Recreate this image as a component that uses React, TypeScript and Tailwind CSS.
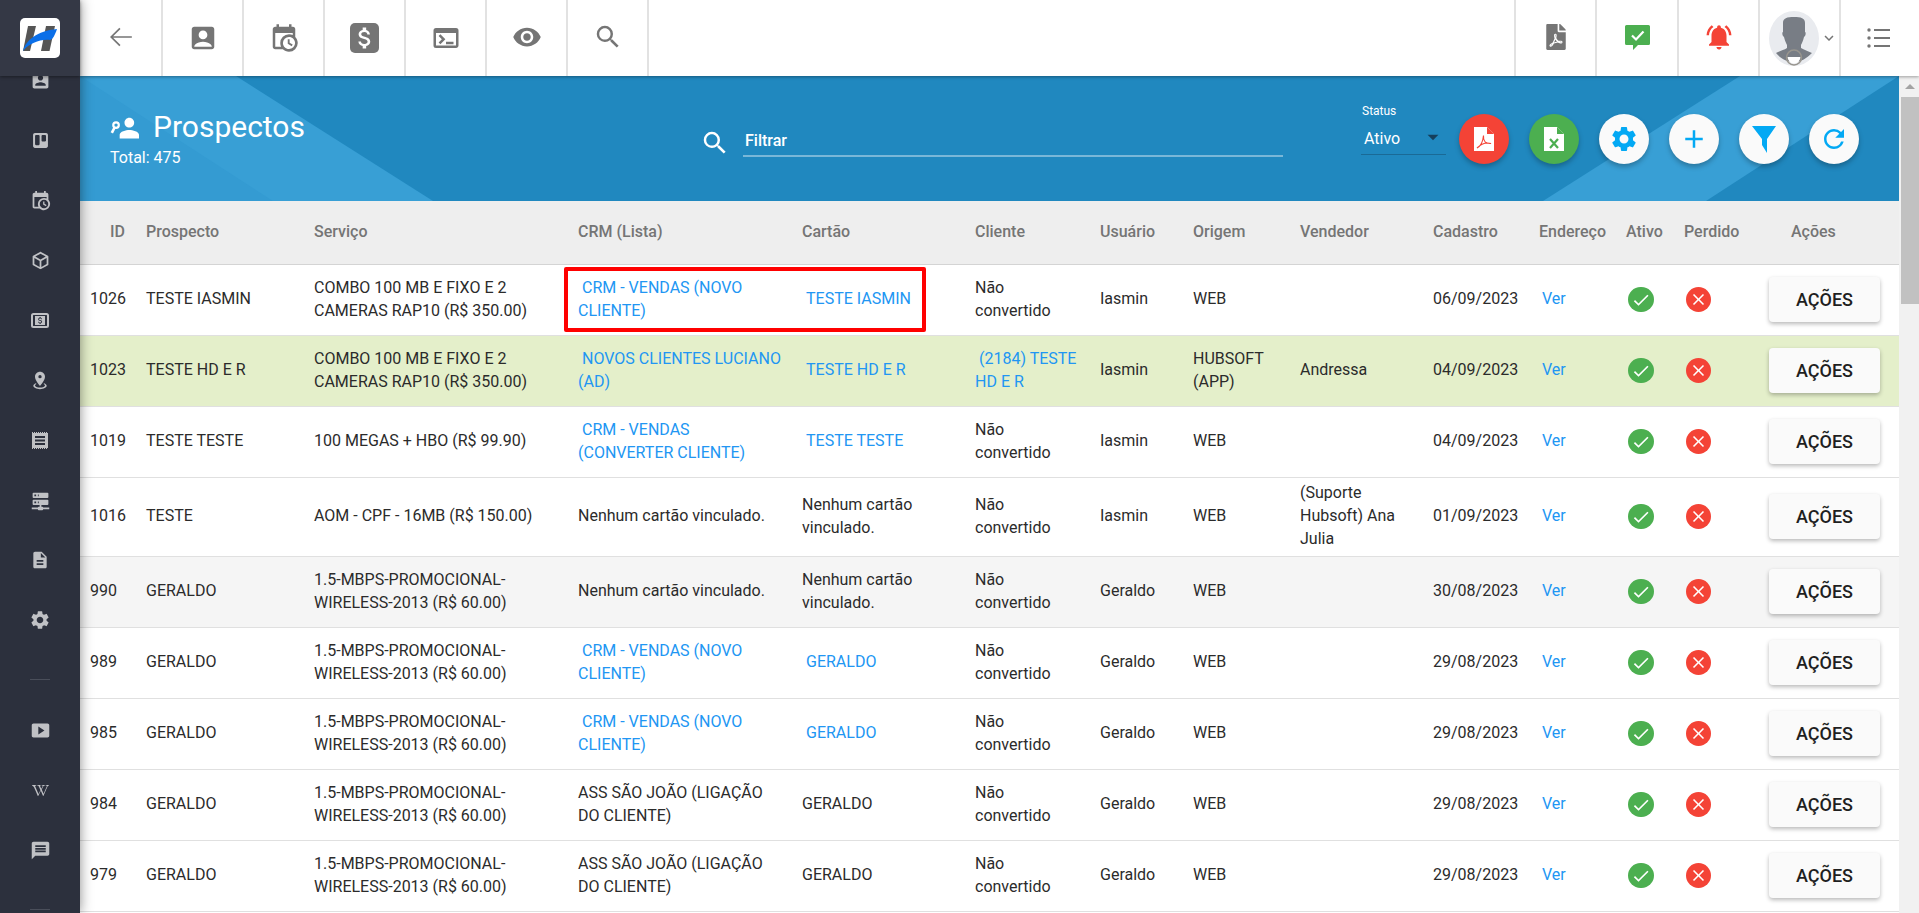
import React from 'react';
import {
  MdAccountBox,
  MdVisibility,
  MdSearch,
  MdTerminal,
  MdNotificationsActive,
  MdSettings,
  MdAdd,
  MdRefresh,
  MdDescription,
  MdSmartDisplay,
  MdMessage,
  MdCheck,
  MdClose,
  MdArrowDropDown,
  MdExpandMore,
  MdAttachMoney,
} from 'react-icons/md';
import { FaTrello, FaFilePdf, FaWikipediaW } from 'react-icons/fa';

const calendarClock =
  'M15,13H16.5V15.82L18.94,17.23L18.19,18.53L15,16.69V13M19,8H5V19H9.67C9.24,18.09 9,17.07 9,16A7,7 0 0,1 16,9C17.07,9 18.09,9.24 19,9.67V8M5,21C3.89,21 3,20.1 3,19V5C3,3.89 3.89,3 5,3H6V1H8V3H16V1H18V3H19A2,2 0 0,1 21,5V11.1C22.24,12.36 23,14.09 23,16A7,7 0 0,1 16,23C14.09,23 12.36,22.24 11.1,21H5M16,11.15A4.85,4.85 0 0,0 11.15,16C11.15,18.68 13.32,20.85 16,20.85A4.85,4.85 0 0,0 20.85,16C20.85,13.32 18.68,11.15 16,11.15Z';
const cube =
  'M21,16.5C21,16.88 20.79,17.21 20.47,17.38L12.57,21.82C12.41,21.94 12.21,22 12,22C11.79,22 11.59,21.94 11.43,21.82L3.53,17.38C3.21,17.21 3,16.88 3,16.5V7.5C3,7.12 3.21,6.79 3.53,6.62L11.43,2.18C11.59,2.06 11.79,2 12,2C12.21,2 12.41,2.06 12.57,2.18L20.47,6.62C20.79,6.79 21,7.12 21,7.5V16.5M12,4.15L6.04,7.5L12,10.85L17.96,7.5L12,4.15M5,15.91L11,19.29V12.58L5,9.21V15.91M19,15.91V9.21L13,12.58V19.29L19,15.91Z';
const markerRadius =
  'M12,2C15.31,2 18,4.66 18,7.95C18,12.41 12,19 12,19C12,19 6,12.41 6,7.95C6,4.66 8.69,2 12,2M12,6A2,2 0 0,0 10,8A2,2 0 0,0 12,10A2,2 0 0,0 14,8A2,2 0 0,0 12,6M20,19C20,21.21 16.42,23 12,23C7.58,23 4,21.21 4,19C4,17.71 5.22,16.56 7.11,15.83L7.75,16.74C6.67,17.19 6,17.81 6,18.5C6,19.88 8.69,21 12,21C15.31,21 18,19.88 18,18.5C18,17.81 17.33,17.19 16.25,16.74L16.89,15.83C18.78,16.56 20,17.71 20,19Z';
const serverNetwork =
  'M13,19H14A1,1 0 0,1 15,20H22V22H15A1,1 0 0,1 14,23H10A1,1 0 0,1 9,22H2V20H9A1,1 0 0,1 10,19H11V17H4A1,1 0 0,1 3,16V12A1,1 0 0,1 4,11H20A1,1 0 0,1 21,12V16A1,1 0 0,1 20,17H13V19M4,3H20A1,1 0 0,1 21,4V8A1,1 0 0,1 20,9H4A1,1 0 0,1 3,8V4A1,1 0 0,1 4,3M9,7H10V5H9V7M9,15H10V13H9V15M5,5V7H7V5H5M5,13V15H7V13H5Z';
const dollar =
  'M11.8 10.9c-2.27-.59-3-1.2-3-2.15 0-1.09 1.01-1.85 2.7-1.85 1.78 0 2.44.85 2.5 2.1h2.21c-.07-1.72-1.12-3.3-3.21-3.81V3h-3v2.16c-1.94.42-3.5 1.68-3.5 3.61 0 2.31 1.91 3.46 4.7 4.13 2.5.6 3 1.48 3 2.41 0 .69-.49 1.79-2.7 1.79-2.06 0-2.87-.92-2.98-2.1h-2.2c.12 2.19 1.76 3.42 3.68 3.83V21h3v-2.15c1.95-.37 3.5-1.5 3.5-3.55 0-2.84-2.43-3.81-4.7-4.4z';

function PathIcon({ d, size = 24, className = '' }: { d: string; size?: number; className?: string }) {
  return (
    <svg viewBox="0 0 24 24" width={size} height={size} className={className} fill="currentColor">
      <path d={d} />
    </svg>
  );
}

function PersonKey() {
  return (
    <svg viewBox="0 0 24 24" width={29} height={29}>
      <path
        d="M16 14C18.7 14 24 15.300 24 18V21H8V18C8 15.300 13.300 14 16 14M16 12C13.800 12 12 10.200 12 8S13.800 4 16 4 20 5.800 20 8 18.200 12 16 12Z"
        fill="currentColor"
      />
      <circle cx="5" cy="10" r="2.300" fill="none" stroke="currentColor" strokeWidth="1.800" />
      <path d="M3.800 12L1.500 16.500" stroke="currentColor" strokeWidth="2.200" fill="none" />
    </svg>
  );
}

function Logo() {
  return (
    <svg viewBox="0 0 40 40" width={40} height={40} className="rounded-[5px] bg-white">
      <path d="M8 8h8L10 33H3z" fill="#555555" />
      <path d="M26 8h9l-5.500 25H21z" fill="#555555" />
      <path d="M3 33C6 22 17 13 37 11C35 17 33 21 30 22C20 21 10 25 3 33Z" fill="#0b6fe8" />
    </svg>
  );
}

function MoneyBox() {
  return (
    <svg viewBox="0 0 18 15" width={18} height={15} fill="none">
      <rect x="1" y="1" width="16" height="13" rx="1.500" stroke="currentColor" strokeWidth="2" />
      <rect x="4" y="3" width="10" height="9" fill="currentColor" />
      <g transform="translate(4.500 2.700) scale(0.4)">
        <path d={dollar} fill="#2c303d" />
      </g>
    </svg>
  );
}

function Receipt() {
  return (
    <svg viewBox="0 0 16 17" width={16} height={17}>
      <path d="M0 1h16v15H0zM3 4v2h10V4zM3 7.500v2h10v-2zM3 11v2h10v-2z" fill="currentColor" fillRule="evenodd" />
      <path d="M0 .5h16M0 16.500h16" stroke="currentColor" strokeWidth="1" strokeDasharray="1 1" />
    </svg>
  );
}

function ChatCheck() {
  return (
    <svg viewBox="0 0 25 25" width={25} height={25}>
      <path
        d="M1.500 0h22A1.500 1.500 0 0 1 25 1.500v17a1.500 1.500 0 0 1-1.500 1.500H13l-5 5v-5H1.500A1.500 1.500 0 0 1 0 18.500v-17A1.500 1.500 0 0 1 1.500 0z"
        fill="#4caf50"
      />
      <path d="M7 10.500l4 4 7.500-8" fill="none" stroke="#fff" strokeWidth="2.200" />
    </svg>
  );
}

function Avatar() {
  return (
    <svg viewBox="0 0 50 55" width={50} height={55}>
      <ellipse cx="25" cy="27.500" rx="25" ry="27.500" fill="#e9ebef" />
      <path
        d="M14 12C14 7 18 6 25 6s11 1 11 6v9c1 0 1 4-1 5-1 4-2 6-3 8v3c3 2 7 3 11 5-5 5-11 9-18 9C18 51 11 47 7 42c4-2 8-3 11-5v-3c-1-2-2-4-3-8-2-1-2-5-1-5z"
        fill="#787d85"
      />
      <path d="M18.500 46h13a6.500 6.500 0 0 1-13 0z" fill="#ffffff" />
      <ellipse cx="25" cy="46.500" rx="7.500" ry="7.500" fill="none" stroke="#98958e" strokeWidth="1.500" />
    </svg>
  );
}

function ListIcon() {
  return (
    <svg viewBox="0 0 23 20" width={23} height={20} fill="#757575">
      <circle cx="2" cy="2" r="1.700" />
      <circle cx="2" cy="10" r="1.700" />
      <circle cx="2" cy="18" r="1.700" />
      <rect x="7" y="1" width="16" height="2" />
      <rect x="7" y="9" width="16" height="2" />
      <rect x="7" y="17" width="16" height="2" />
    </svg>
  );
}

function DocPdf() {
  return (
    <svg viewBox="0 0 20 24" width={20} height={24}>
      <path d="M0 0h13l7 7v17H0z" fill="#fff" />
      <path d="M13 0v7h7z" fill="#f44336" />
      <path
        d="M3 21c4-2 6-7 6.500-12.500C9 14 11.500 17 17 16.500 12 15 7 17 3 21z"
        fill="none"
        stroke="#f44336"
        strokeWidth="1.100"
      />
    </svg>
  );
}

function DocExcel() {
  return (
    <svg viewBox="0 0 20 24" width={20} height={24}>
      <path d="M0 0h13l7 7v17H0z" fill="#fff" />
      <path d="M13 0v7h7z" fill="#4caf50" />
      <path d="M6 12l8 9M14 12L6 21" fill="none" stroke="#4caf50" strokeWidth="2.200" />
    </svg>
  );
}

function Funnel() {
  return (
    <svg viewBox="0 0 24 27" width={24} height={27} fill="#03a9f4">
      <path d="M0 0h24L15 13v14l-5-8v-6z" />
    </svg>
  );
}

function HeaderShapes() {
  return (
    <svg className="absolute inset-0 h-full w-full" viewBox="0 0 1819 125" preserveAspectRatio="none">
      <path d="M0 0H156L353 125H0Z" fill="#389fd5" />
      <path d="M0 0L193 125H0Z" fill="#349bd2" />
      <path d="M1660 0H1819L1626 125H1463Z" fill="#389fd5" />
    </svg>
  );
}

const sideTop = [
  <PathIcon d="M3 5v14c0 1.100.89 2 2 2h14c1.100 0 2-.9 2-2V5c0-1.100-.9-2-2-2H5c-1.110 0-2 .9-2 2zm12 4c0 1.660-1.340 3-3 3s-3-1.340-3-3 1.340-3 3-3 3 1.340 3 3zm-9 8c0-2 4-3.100 6-3.100s6 1.100 6 3.100v1H6v-1z" size={21} key="a" />,
  <FaTrello size={17} key="b" />,
  <PathIcon d={calendarClock} size={21} key="c" />,
  <PathIcon d={cube} size={21} key="d" />,
  <MoneyBox key="e" />,
  <PathIcon d={markerRadius} size={20} key="f" />,
  <Receipt key="g" />,
  <PathIcon d={serverNetwork} size={21} key="h" />,
  <MdDescription size={20} key="i" />,
  <MdSettings size={22} key="j" />,
];

const sideBottom = [
  <MdSmartDisplay size={21} key="a" />,
  <FaWikipediaW size={17} key="b" />,
  <MdMessage size={21} key="c" />,
];

function Sidebar() {
  return (
    <aside className="relative z-20 flex h-full w-20 shrink-0 flex-col bg-[#2c303d] text-[#c0c1c5] shadow-[0_0_12px_rgba(0,0,0,0.45)]">
      <div className="relative z-10 flex h-[76px] items-center justify-center bg-[#343845] shadow-[0_1px_3px_rgba(0,0,0,0.4)]">
        <Logo />
      </div>
      <nav className="-mt-[26px] flex flex-col items-center">
        {sideTop.map((icon, i) => (
          <div key={i} className="flex h-[60px] w-full items-center justify-center">
            {icon}
          </div>
        ))}
        <div className="mt-[29px] mb-[20px] h-px w-5 bg-[#4a4e5a]" />
        {sideBottom.map((icon, i) => (
          <div key={i} className="flex h-[60px] w-full items-center justify-center">
            {icon}
          </div>
        ))}
        <div className="mt-[29px] h-px w-5 bg-[#4a4e5a]" />
      </nav>
    </aside>
  );
}

function TopButton({ children, w = 'w-[81px]' }: { children: React.ReactNode; w?: string }) {
  return <div className={`flex h-full items-center justify-center border-r-2 border-[#e2e2e2] ${w}`}>{children}</div>;
}

function TopBar() {
  return (
    <header className="relative z-10 flex h-[76px] shrink-0 items-stretch justify-between bg-white text-[#757575] shadow-[0_1px_3px_rgba(0,0,0,0.35)]">
      <div className="flex">
        <TopButton w="w-[83px]">
          <svg viewBox="0 0 24 24" width={26} height={26} fill="none" stroke="currentColor" strokeWidth="1.600" className="mb-[2px]">
            <path d="M22 12H3m8-8l-8 8 8 8" />
          </svg>
        </TopButton>
        <TopButton>
          <MdAccountBox size={30} />
        </TopButton>
        <TopButton>
          <PathIcon d={calendarClock} size={30} />
        </TopButton>
        <TopButton>
          <div className="flex h-[30px] w-[29px] items-center justify-center rounded-[5px] bg-[#757575] text-white">
            <MdAttachMoney size={28} />
          </div>
        </TopButton>
        <TopButton>
          <MdTerminal size={30} />
        </TopButton>
        <TopButton>
          <MdVisibility size={30} className="mb-[2px]" />
        </TopButton>
        <TopButton>
          <MdSearch size={30} className="mb-[2px]" />
        </TopButton>
      </div>
      <div className="flex">
        <div className="border-r-2 border-[#e2e2e2]" />
        <TopButton>
          <FaFilePdf size={26} className="mb-[2px]" />
        </TopButton>
        <TopButton w="w-[82px]">
          <div className="mb-[2px]">
            <ChatCheck />
          </div>
        </TopButton>
        <TopButton>
          <MdNotificationsActive size={30} className="mb-[2px] text-[#f44336]" />
        </TopButton>
        <TopButton>
          <div className="flex items-center pl-2">
            <Avatar />
            <MdExpandMore size={18} className="ml-px" />
          </div>
        </TopButton>
        <div className="flex w-[78px] items-center justify-center pr-1">
          <ListIcon />
        </div>
      </div>
    </header>
  );
}

function RoundButton({ children, bg = 'bg-[#fafafa]' }: { children: React.ReactNode; bg?: string }) {
  return (
    <button
      className={`flex h-[50px] w-[50px] items-center justify-center rounded-full shadow-[0_3px_5px_rgba(0,0,0,0.25)] ${bg}`}
    >
      {children}
    </button>
  );
}

function PageHeader() {
  return (
    <section className="relative flex h-[125px] shrink-0 items-start bg-[#2088bf] text-white">
      <HeaderShapes />
      <div className="relative w-[620px] pt-[30px] pl-[30px]">
        <div className="flex items-center gap-[14px]">
          <PersonKey />
          <span className="text-[30px] leading-[42px] font-normal">Prospectos</span>
        </div>
        <div className="text-[16px] leading-5">Total: 475</div>
      </div>
      <div className="relative mt-[52px] flex w-[583px] items-start">
        <MdSearch size={30} />
        <div className="ml-[13px] flex-1 border-b-2 border-white/40 pt-[1px] pb-[2px] pl-[2px] text-[16px] leading-6 font-medium">
          Filtrar
        </div>
      </div>
      <div className="relative mt-[28px] ml-[78px] w-[85px] shrink-0">
        <div className="pl-px text-[12px] leading-[14px]">Status</div>
        <div className="mt-[2px] flex h-[35px] items-center justify-between border-b border-[#1a6a96] pl-[3px] text-[16px]">
          <span className="mt-1">Ativo</span>
          <MdArrowDropDown size={26} className="text-[#153f5c]" />
        </div>
      </div>
      <div className="relative mt-[38px] ml-[13px] flex gap-5">
        <RoundButton bg="bg-[#f44336]">
          <DocPdf />
        </RoundButton>
        <RoundButton bg="bg-[#4caf50]">
          <DocExcel />
        </RoundButton>
        <RoundButton>
          <MdSettings size={30} className="text-[#03a9f4]" />
        </RoundButton>
        <RoundButton>
          <MdAdd size={30} className="text-[#03a9f4]" />
        </RoundButton>
        <RoundButton>
          <Funnel />
        </RoundButton>
        <RoundButton>
          <MdRefresh size={30} className="text-[#03a9f4]" />
        </RoundButton>
      </div>
    </section>
  );
}

type Row = {
  id: string;
  name: string;
  service: string;
  crm: string;
  crmLink?: boolean;
  card: string;
  cardLink?: boolean;
  client: string;
  clientLink?: boolean;
  user: string;
  origin: string;
  seller: string;
  date: string;
  bg?: string;
};

const none = 'Nenhum cartão vinculado.';
const nc = 'Não convertido';
const wireless = '1.5-MBPS-PROMOCIONAL-WIRELESS-2013 (R$ 60.00)';
const combo = 'COMBO 100 MB E FIXO E 2 CAMERAS RAP10 (R$ 350.00)';
const vendas = 'CRM - VENDAS (NOVO CLIENTE)';
const ass = 'ASS SÃO JOÃO (LIGAÇÃO DO CLIENTE)';

const rows: Row[] = [
  { id: '1026', name: 'TESTE IASMIN', service: combo, crm: vendas, crmLink: true, card: 'TESTE IASMIN', cardLink: true, client: nc, user: 'Iasmin', origin: 'WEB', seller: '', date: '06/09/2023' },
  { id: '1023', name: 'TESTE HD E R', service: combo, crm: 'NOVOS CLIENTES LUCIANO (AD)', crmLink: true, card: 'TESTE HD E R', cardLink: true, client: '(2184) TESTE HD E R', clientLink: true, user: 'Iasmin', origin: 'HUBSOFT (APP)', seller: 'Andressa', date: '04/09/2023', bg: 'bg-[#e4efca]' },
  { id: '1019', name: 'TESTE TESTE', service: '100 MEGAS + HBO (R$ 99.90)', crm: 'CRM - VENDAS (CONVERTER CLIENTE)', crmLink: true, card: 'TESTE TESTE', cardLink: true, client: nc, user: 'Iasmin', origin: 'WEB', seller: '', date: '04/09/2023' },
  { id: '1016', name: 'TESTE', service: 'AOM - CPF - 16MB (R$ 150.00)', crm: none, card: none, client: nc, user: 'Iasmin', origin: 'WEB', seller: '(Suporte Hubsoft) Ana Julia', date: '01/09/2023' },
  { id: '990', name: 'GERALDO', service: wireless, crm: none, card: none, client: nc, user: 'Geraldo', origin: 'WEB', seller: '', date: '30/08/2023', bg: 'bg-[#f5f5f5]' },
  { id: '989', name: 'GERALDO', service: wireless, crm: vendas, crmLink: true, card: 'GERALDO', cardLink: true, client: nc, user: 'Geraldo', origin: 'WEB', seller: '', date: '29/08/2023' },
  { id: '985', name: 'GERALDO', service: wireless, crm: vendas, crmLink: true, card: 'GERALDO', cardLink: true, client: nc, user: 'Geraldo', origin: 'WEB', seller: '', date: '29/08/2023' },
  { id: '984', name: 'GERALDO', service: wireless, crm: ass, card: 'GERALDO', client: nc, user: 'Geraldo', origin: 'WEB', seller: '', date: '29/08/2023' },
  { id: '979', name: 'GERALDO', service: wireless, crm: ass, card: 'GERALDO', client: nc, user: 'Geraldo', origin: 'WEB', seller: '', date: '29/08/2023' },
];

const columns = [
  { label: 'ID', w: 'w-[56px]', align: 'text-right pr-[11px]' },
  { label: 'Prospecto', w: 'w-[168px]' },
  { label: 'Serviço', w: 'w-[264px]' },
  { label: 'CRM (Lista)', w: 'w-[224px]' },
  { label: 'Cartão', w: 'w-[173px]' },
  { label: 'Cliente', w: 'w-[125px]' },
  { label: 'Usuário', w: 'w-[93px]' },
  { label: 'Origem', w: 'w-[107px]' },
  { label: 'Vendedor', w: 'w-[133px]' },
  { label: 'Cadastro', w: 'w-[106px]' },
  { label: 'Endereço', w: 'w-[87px]' },
  { label: 'Ativo', w: 'w-[58px]' },
  { label: 'Perdido', w: 'w-[85px]' },
  { label: 'Ações', w: 'w-[140px]', align: 'text-left pl-[32px]' },
];

function Cell({ text, link }: { text: string; link?: boolean }) {
  const cls = 'px-[10px] pt-[3.500px] pb-[5.500px] align-middle';
  if (link) {
    return (
      <td className={cls}>
        <a className="block indent-1 text-[#2196f3]">{text}</a>
      </td>
    );
  }
  return <td className={cls}>{text}</td>;
}

function ProspectsTable() {
  return (
    <table className="w-full table-fixed border-collapse text-[16px] leading-[23px] text-[#2b2b2b]">
      <thead>
        <tr className="h-[63px] border-b border-[#d4d4d4] bg-[#eeeeee] text-[#757575]">
          {columns.map((c) => (
            <th key={c.label} className={`px-[10px] pb-[2px] text-[16px] font-medium ${c.w} ${c.align ?? 'text-left'}`}>
              {c.label}
            </th>
          ))}
        </tr>
      </thead>
      <tbody>
        {rows.map((r) => (
          <tr key={r.id} className={`h-[71px] border-b border-[#e0e0e0] ${r.bg ?? ''}`}>
            <Cell text={r.id} />
            <Cell text={r.name} />
            <Cell text={r.service} />
            <Cell text={r.crm} link={r.crmLink} />
            <Cell text={r.card} link={r.cardLink} />
            <Cell text={r.client} link={r.clientLink} />
            <Cell text={r.user} />
            <Cell text={r.origin} />
            <Cell text={r.seller} />
            <Cell text={r.date} />
            <td className="px-[13px] pb-[2px] align-middle text-[#2196f3]">Ver</td>
            <td className="px-3 align-middle">
              <span className="flex h-[25px] w-[26px] items-center justify-center rounded-full bg-[#4caf50] text-white">
                <MdCheck size={20} />
              </span>
            </td>
            <td className="px-[12px] align-middle">
              <span className="flex h-[25px] w-[25px] items-center justify-center rounded-full bg-[#f44336] text-white">
                <MdClose size={19} />
              </span>
            </td>
            <td className="pr-[19px] pl-[10px] align-middle">
              <button className="flex h-[45px] w-[111px] items-center justify-center rounded-[4px] bg-[#fafafa] text-[18px] font-medium text-[#1f1f1f] shadow-[0_2px_4px_rgba(0,0,0,0.28)]">
                AÇÕES
              </button>
            </td>
          </tr>
        ))}
      </tbody>
    </table>
  );
}

function Scrollbar() {
  return (
    <div className="flex w-5 shrink-0 flex-col items-end bg-[#f1f1f1]">
      <div className="flex h-[21px] w-full items-center justify-center pl-[2px]">
        <div className="h-0 w-0 border-x-[5px] border-b-[5px] border-x-transparent border-b-[#a3a3a3]" />
      </div>
      <div className="h-[207px] w-[18px] bg-[#c1c1c1]" />
    </div>
  );
}

export default function App() {
  return (
    <div className="flex h-screen w-full overflow-hidden bg-white font-['Roboto',sans-serif]">
      <Sidebar />
      <main className="flex min-w-0 flex-1 flex-col">
        <TopBar />
        <div className="flex min-h-0 flex-1">
          <div className="relative min-w-0 flex-1">
            <PageHeader />
            <ProspectsTable />
            {/* Destaque vermelho sobre as colunas CRM e Cartão */}
            <div className="absolute top-[191px] left-[484px] h-[65px] w-[362px] rounded-[2px] border-[4px] border-[#ff0000]" />
          </div>
          <Scrollbar />
        </div>
      </main>
    </div>
  );
}
